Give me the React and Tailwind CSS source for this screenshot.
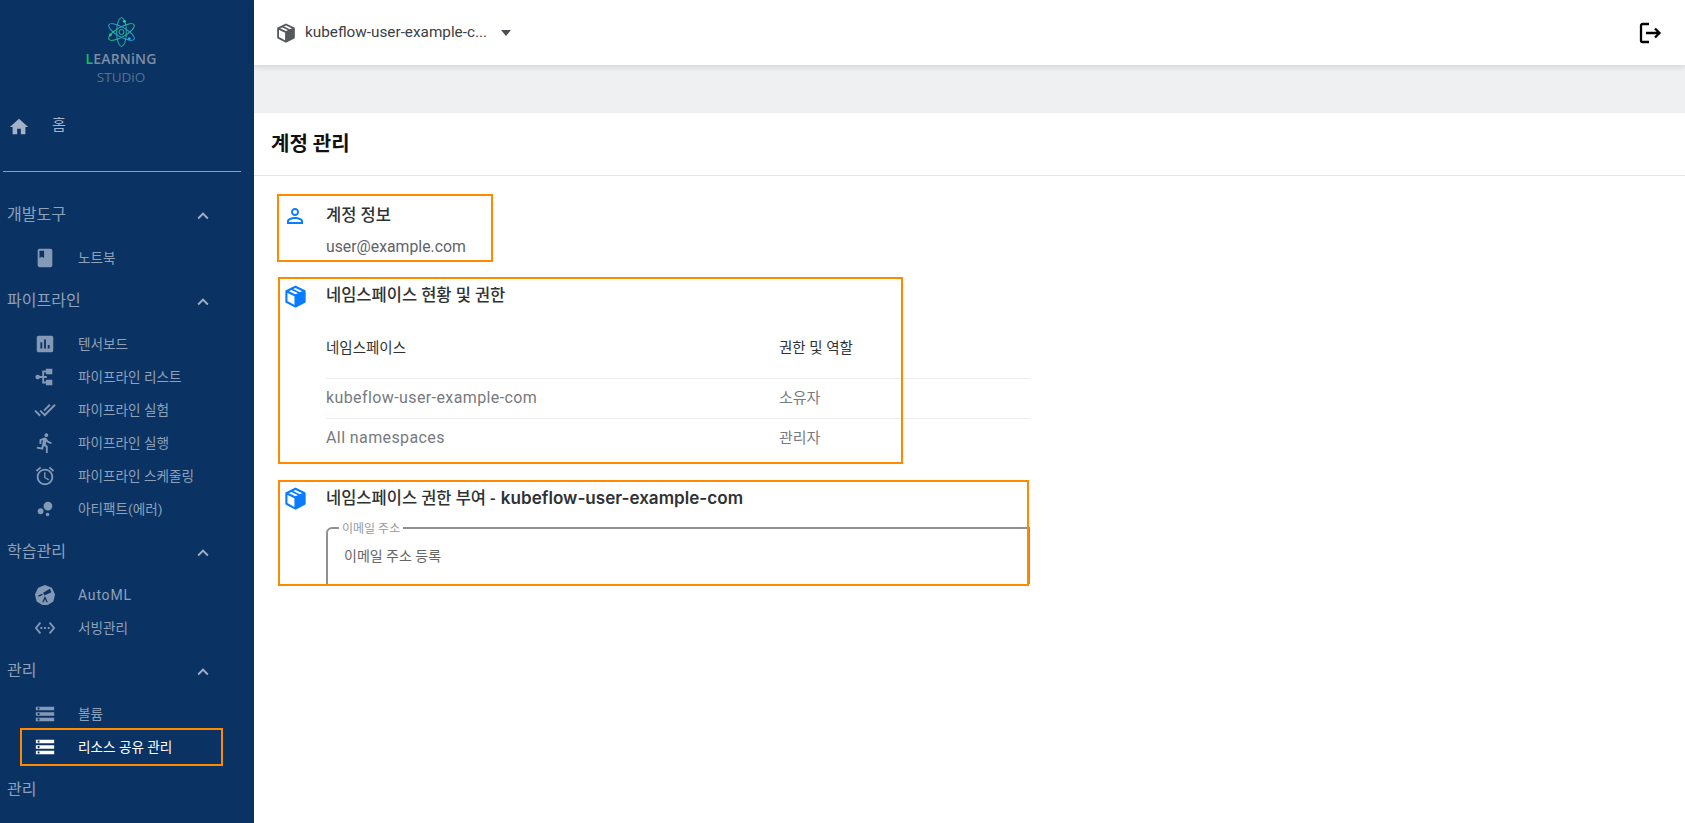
import React from 'react';

const KR = "font-['Roboto','Noto_Sans_CJK_KR',sans-serif]";

const Mui = ({ d, className = '' }) => (
  <svg viewBox="0 0 24 24" className={className} fill="currentColor"><path d={d} /></svg>
);

const icons = {
  home: 'M10 20v-6h4v6h5v-8h3L12 3 2 12h3v8z',
  book: 'M18 2H6c-1.1 0-2 .9-2 2v16c0 1.1.9 2 2 2h12c1.1 0 2-.9 2-2V4c0-1.1-.9-2-2-2zM6 4h5v8l-2.5-1.500L6 12V4z',
  assessment: 'M19 3H5c-1.1 0-2 .9-2 2v14c0 1.1.9 2 2 2h14c1.1 0 2-.9 2-2V5c0-1.1-.9-2-2-2zM9 17H7v-7h2v7zm4 0h-2V7h2v10zm4 0h-2v-4h2v4z',
  pipeline: 'M13 3h7v6h-7zM13 15h7v6h-7zM1.500 12a2.500 2.500 0 0 1 4.800-1H9V5h4v2h-2v4h3v2h-3v4h2v2H9v-6H6.300a2.500 2.500 0 0 1-4.800-1z',
  doneAll: 'M18 7l-1.41-1.41-6.34 6.34 1.41 1.41L18 7zm4.24-1.41L11.66 16.17 7.48 12l-1.41 1.41L11.66 19l12-12-1.42-1.41zM.41 13.41L6 19l1.41-1.41L1.83 12 .41 13.41z',
  run: 'M13.49 5.48c1.1 0 2-.9 2-2s-.9-2-2-2-2 .9-2 2 .9 2 2 2zm-3.6 13.9l1-4.4 2.1 2v6h2v-7.5l-2.1-2 .6-3c1.3 1.5 3.3 2.5 5.5 2.5v-2c-1.9 0-3.5-1-4.3-2.4l-1-1.6c-.4-.6-1-1-1.7-1-.3 0-.5.1-.8.1l-5.2 2.2v4.7h2v-3.4l1.8-.7-1.6 8.1-4.9-1-.4 2 7 1.4z',
  alarm: 'M22 5.72l-4.6-3.86-1.29 1.53 4.6 3.86L22 5.72zM7.88 3.39L6.6 1.86 2 5.71l1.29 1.53 4.59-3.85zM12.5 8H11v6l4.75 2.85.75-1.23-4-2.37V8zM12 4c-4.97 0-9 4.03-9 9s4.02 9 9 9c4.97 0 9-4.03 9-9s-4.03-9-9-9zm0 16c-3.87 0-7-3.13-7-7s3.13-7 7-7 7 3.13 7 7-3.13 7-7 7z',
  bubble: 'M7.2 11.2a3.2 3.2 0 1 0 0 6.4 3.2 3.2 0 0 0 0-6.4zM14.8 16a2 2 0 1 0 0 4 2 2 0 0 0 0-4zM15.2 4a4.8 4.8 0 1 0 0 9.6 4.8 4.8 0 0 0 0-9.6z',
  automl: 'M12 1l7.500 3.200 3.500 7.300-1.900 7.600L15 23H9l-6.100-3.900L1 11.500l3.500-7.300zM4.500 12.500l.6 1.400 4.400-2-.6-1.400zM10 9.500l1.200 3 7.800-3.600-1.600-3.600zM11.500 14l-2.500 6h1.400l1.600-3.600 1.600 3.600H15l-2.500-6z',
  ethernet: 'M7.77 6.76L6.23 5.48.82 12l5.41 6.52 1.54-1.28L3.42 12l4.35-5.24zM7 13h2v-2H7v2zm10-2h-2v2h2v-2zm-6 2h2v-2h-2v2zm6.77-7.520l-1.54 1.28L20.58 12l-4.35 5.24 1.54 1.28L23.18 12l-5.41-6.52z',
  storage: 'M2 20h20v-4H2v4zm2-3h2v2H4v-2zM2 4v4h20V4H2zm4 3H4V5h2v2zm-4 7h20v-4H2v4zm2-3h2v2H4v-2z',
  chevron: 'M7.41 15.41 12 10.83l4.59 4.58L18 14l-6-6-6 6z',
  person: 'M12 5.9a2.1 2.1 0 1 1 0 4.2 2.1 2.1 0 0 1 0-4.2m0 9c2.97 0 6.1 1.46 6.1 2.1v1.1H5.9V17c0-.64 3.13-2.1 6.1-2.1M12 4C9.79 4 8 5.79 8 8s1.79 4 4 4 4-1.79 4-4-1.79-4-4-4zm0 9c-2.67 0-8 1.34-8 4v3h16v-3c0-2.66-5.33-4-8-4z',
};

// box icon used for namespaces, right face is solid
const Cube = ({ className = '' }) => (
  <svg viewBox="0 0 24 24" className={className} fill="none" stroke="currentColor" strokeWidth="2.2" strokeLinejoin="round">
    <path d="M12 11 21.500 6.500V17.500L12 22.500z" fill="currentColor" stroke="none" />
    <path d="M12 1.800 2.500 6.500v11L12 22.500l9.500-5v-11z" />
    <path d="M2.500 6.500 12 11l9.500-4.500M12 11v11" />
    <path d="M7.500 4.200l9.200 4.500v2.500" strokeWidth="1.800" />
  </svg>
);

const Logo = () => (
  <div className="flex flex-col items-center h-[93px] pt-[16px] pr-[12px]">
    <svg viewBox="0 0 30 32" className="w-[29px] h-[32px]" fill="none" strokeWidth="1">
      <ellipse cx="15" cy="16" rx="5" ry="15" stroke="#22b8a0" />
      <ellipse cx="15" cy="16" rx="5" ry="15" stroke="#1fc68a" transform="rotate(60 15 16)" />
      <ellipse cx="15" cy="16" rx="5" ry="15" stroke="#2aa4d8" transform="rotate(-60 15 16)" />
      <circle cx="15" cy="16" r="2.600" stroke="#2bbcae" />
      <circle cx="18" cy="5" r="1.500" fill="#2bd0c0" stroke="none" />
      <circle cx="3.500" cy="19" r="1.500" fill="#1fd070" stroke="none" />
      <circle cx="23" cy="23" r="1.500" fill="#2aa4e8" stroke="none" />
    </svg>
    <div className="mt-[2px] text-[14px] leading-[18px] font-semibold tracking-[0.2px] text-[#7d8ca2] font-['Open_Sans',sans-serif]">
      <span className="text-[#12c25a]">L</span>EARNiNG
    </div>
    <div className="text-[13.500px] leading-[18px] text-[#5a708c] font-['Open_Sans',sans-serif]">STUDiO</div>
  </div>
);

const Group = ({ label, collapsed }) => (
  <div className="flex items-center h-[53px] pt-[2px] pl-[7px] text-[16px] text-[#8fa1b8]">
    <span className="w-[185px]">{label}</span>
    {!collapsed && <Mui d={icons.chevron} className="w-[22px] h-[22px] mt-[3px] text-[#a0afc3]" />}
  </div>
);

const Item = ({ icon, label, active }) => (
  <div className={`flex items-center h-[33px] pt-[4px] pl-[33px] text-[13.600px] ${active ? 'text-white' : 'text-[#8fa1b8]'}`}>
    <span className="w-[45px] flex -mt-[2px]">
      <Mui d={icons[icon]} className={`w-[22px] h-[22px] ml-[1px] ${active ? 'text-white' : 'text-[#8499b5]'}`} />
    </span>
    <span className={icon === 'automl' ? 'text-[14px] tracking-[0.8px]' : ''}>{label}</span>
  </div>
);

const Sidebar = () => (
  <aside className="w-[254px] h-full shrink-0 bg-[#0a3364]">
    <Logo />
    <div className="flex items-center h-[64px] pl-[8px] text-[#a3b2c6]">
      <Mui d={icons.home} className="w-[22px] h-[22px] mt-[4px]" />
      <span className="ml-[22px] text-[15px]">홈</span>
    </div>
    <div className="ml-[3px] w-[238px] h-px bg-[#8ea0b8] mt-[14px] mb-[15px]" />
    <Group label="개발도구" />
    <Item icon="book" label="노트북" />
    <Group label="파이프라인" />
    <Item icon="assessment" label="텐서보드" />
    <Item icon="pipeline" label="파이프라인 리스트" />
    <Item icon="doneAll" label="파이프라인 실험" />
    <Item icon="run" label="파이프라인 실행" />
    <Item icon="alarm" label="파이프라인 스케줄링" />
    <Item icon="bubble" label="아티팩트(에러)" />
    <Group label="학습관리" />
    <Item icon="automl" label="AutoML" />
    <Item icon="ethernet" label="서빙관리" />
    <Group label="관리" />
    <Item icon="storage" label="볼륨" />
    <Item icon="storage" label="리소스 공유 관리" active />
    <Group label="관리" collapsed />
  </aside>
);

const Topbar = () => (
  <header className="relative z-10 flex items-center justify-between h-[65px] pl-[22px] pr-[23px] bg-white shadow-[0_2px_6px_rgba(0,0,0,0.12)]">
    <div className="flex items-center text-[#3c4043]">
      <Cube className="w-[20px] h-[20px] text-[#55595e]" />
      <span className="ml-[9px] text-[15.300px] text-[#3c4043]">kubeflow-user-example-c...</span>
      <span className="ml-[14px] w-0 h-0 border-x-[5.500px] border-x-transparent border-t-[6px] border-t-[#4a4f55]" />
    </div>
    <svg viewBox="0 0 24 24" className="w-[24px] h-[24px] text-black" fill="none" stroke="currentColor" strokeWidth="2.300">
      <path d="M11 3H4.500A1.500 1.500 0 0 0 3 4.500v15A1.500 1.500 0 0 0 4.500 21H11M8 12h13M17 7.500l4.500 4.500-4.500 4.500" />
    </svg>
  </header>
);

const Row = ({ left, right, last }) => (
  <div className={`flex items-center h-[39.500px] text-[#777a7e] ${last ? '' : 'border-b border-[#eeeeee]'}`}>
    <span className="w-[453px] text-[16px] tracking-[0.4px]">{left}</span>
    <span className="text-[15px]">{right}</span>
  </div>
);

const Account = () => (
  <main className={`flex-1 min-w-0 flex flex-col bg-white ${KR}`}>
    <Topbar />
    <div className="h-[48px] bg-[#eff0f2]" />
    <h1 className="flex items-center h-[63px] pl-[17px] border-b border-[#e5e5e5] text-[20px] font-bold text-[#111]">계정 관리</h1>

    <section className="pl-[30px] pr-[655px] pt-[22px]">
      <div className="flex items-center h-[36px]">
        <Mui d={icons.person} className="w-[24px] h-[24px] -ml-[1px] text-[#0a7cff]" />
        <span className="ml-[19px] text-[16.500px] font-medium text-[#2f3235]">계정 정보</span>
      </div>
      <div className="pl-[42px] h-[26px] leading-[26px] text-[15.800px] text-[#5f6368]">user@example.com</div>
    </section>

    <section className="pl-[30px] pr-[655px] pt-[18px]">
      <div className="flex items-center h-[36px]">
        <Cube className="w-[23px] h-[23px] text-[#0a7cff]" />
        <span className="ml-[19px] text-[16.500px] font-medium text-[#2f3235]">네임스페이스 현황 및 권한</span>
      </div>
      <div className="ml-[42px]">
        <div className="flex items-center h-[65px] pt-[6px] border-b border-[#eeeeee] text-[14.500px] text-[#2f3235]">
          <span className="w-[453px]">네임스페이스</span>
          <span>권한 및 역할</span>
        </div>
        <Row left="kubeflow-user-example-com" right="소유자" />
        <Row left="All namespaces" right="관리자" last />
      </div>
    </section>

    <section className="pl-[30px] pr-[655px] pt-[25px]">
      <div className="flex items-center h-[30px]">
        <Cube className="w-[23px] h-[23px] text-[#0a7cff]" />
        <span className="ml-[19px] text-[16.500px] font-medium text-[#2f3235]">
          네임스페이스 권한 부여 - <span className="ml-[1px] font-['Inter',sans-serif] font-semibold text-[17.100px]">kubeflow-user-example-com</span>
        </span>
      </div>
      <div className="ml-[42px] mt-[6px] h-[65px] overflow-hidden">
        <fieldset className="h-[100px] border-2 border-[#909090] rounded-tl-[6px] pl-[11px]">
          <legend className="px-[3px] pt-[3px] text-[12px] leading-[15px] text-[#9a9a9a]">이메일 주소</legend>
          <div className="pl-[5px] pt-[9px] text-[14px] text-[#666]">이메일 주소 등록</div>
        </fieldset>
      </div>
    </section>
  </main>
);

const Highlight = ({ className }) => (
  <div className={`absolute border-2 border-[#ff8a00] pointer-events-none ${className}`} />
);

export default function App() {
  return (
    <div className={`relative flex h-screen overflow-hidden bg-white ${KR}`}>
      <Sidebar />
      <Account />
      <Highlight className="left-[277px] top-[194px] w-[216px] h-[68px]" />
      <Highlight className="left-[278px] top-[277px] w-[625px] h-[187px]" />
      <Highlight className="left-[278px] top-[480px] w-[751px] h-[106px]" />
      <Highlight className="left-[20px] top-[728px] w-[203px] h-[38px]" />
    </div>
  );
}
